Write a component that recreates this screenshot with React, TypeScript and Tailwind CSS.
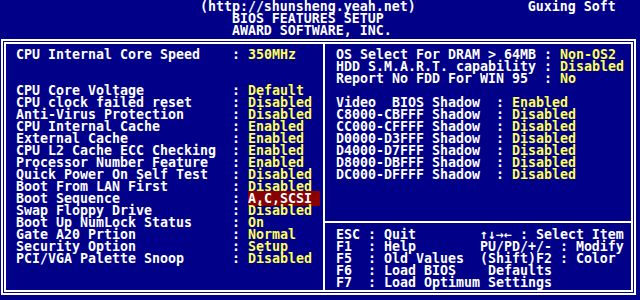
// Award BIOS "BIOS FEATURES SETUP" screen, 80x25 text mode at 8x12 cells.

type Item = [string, string] | null;

const leftItems: Item[] = [
  ["CPU Internal Core Speed", "350MHz"],
  null,
  null,
  ["CPU Core Voltage", "Default"],
  ["CPU clock failed reset", "Disabled"],
  ["Anti-Virus Protection", "Disabled"],
  ["CPU Internal Cache", "Enabled"],
  ["External Cache", "Enabled"],
  ["CPU L2 Cache ECC Checking", "Enabled"],
  ["Processor Number Feature", "Enabled"],
  ["Quick Power On Self Test", "Disabled"],
  ["Boot From LAN First", "Disabled"],
  ["Boot Sequence", "A,C,SCSI"],
  ["Swap Floppy Drive", "Disabled"],
  ["Boot Up NumLock Status", "On"],
  ["Gate A20 Prtion", "Normal"],
  ["Security Option", "Setup"],
  ["PCI/VGA Palette Snoop", "Disabled"],
  null,
  null,
];

const rightTop: ([string, string, number] | null)[] = [
  ["OS Select For DRAM > 64MB", "Non-OS2", 26],
  ["HDD S.M.A.R.T. capability", "Disabled", 26],
  ["Report No FDD For WIN 95", "No", 26],
  null,
  ["Video  BIOS Shadow", "Enabled", 20],
  ["C8000-CBFFF Shadow", "Disabled", 20],
  ["CC000-CFFFF Shadow", "Disabled", 20],
  ["D0000-D3FFF Shadow", "Disabled", 20],
  ["D4000-D7FFF Shadow", "Disabled", 20],
  ["D8000-DBFFF Shadow", "Disabled", 20],
  ["DC000-DFFFF Shadow", "Disabled", 20],
  null,
  null,
  null,
];

const helpLines = [
  "ESC : Quit        \u2191\u2193\u2192\u2190 : Select Item",
  "F1  : Help        PU/PD/+/- : Modify",
  "F5  : Old Values  (Shift)F2 : Color",
  "F6  : Load BIOS    Defaults",
  "F7  : Load Optimum Settings",
];

const HIGHLIGHT = "Boot Sequence";

// one 12px text row; text sits 1px low in the cell like the VGA font does
function Line({ children }: { children?: React.ReactNode }) {
  return (
    <div className="h-[12px] whitespace-pre">
      <div className="relative top-[1px] leading-[12px]">{children}</div>
    </div>
  );
}

export default function App() {
  return (
    <div
      className="h-[300px] w-[640px] overflow-hidden bg-[#000088] text-[13.29px] font-bold text-white"
      style={{ fontFamily: '"DejaVu Sans Mono", "Liberation Mono", monospace' }}
    >
      {/* header, rows 0-2 */}
      <Line>
        {" ".repeat(25)}(http://shunsheng.yeah.net){" ".repeat(14)}Guxing Soft
      </Line>
      <Line>{" ".repeat(29)}BIOS FEATURES SETUP</Line>
      <Line>{" ".repeat(29)}AWARD SOFTWARE, INC.</Line>

      <div className="ml-[1px] mt-[3px] flex h-[256px] w-[635px] border-[5px] border-double border-white">
        {/* left column */}
        <div className="w-[319px] border-r-2 border-white pl-[10px] pt-[4px]">
          {leftItems.map((item, i) =>
            item ? (
              <Line key={i}>
                {item[0].padEnd(27)}: {item[0] === HIGHLIGHT ? (
                  <span className="bg-[#880000] text-white">{item[1].padEnd(9)}</span>
                ) : (
                  <span className="text-[#ffff55]">{item[1]}</span>
                )}
              </Line>
            ) : (
              <Line key={i} />
            )
          )}
        </div>

        {/* right column */}
        <div className="flex flex-1 flex-col pt-[4px]">
          <div className="pl-[11px]">
            {rightTop.map((item, i) =>
              item ? (
                <Line key={i}>
                  {item[0].padEnd(item[2])}: <span className="text-[#ffff55]">{item[1]}</span>
                </Line>
              ) : (
                <Line key={i} />
              )
            )}
          </div>
          <div className="mt-[5px] h-[2px] bg-white" />
          <div className="mt-[5px] pl-[11px]">
            {helpLines.map((text) => (
              <Line key={text}>{text}</Line>
            ))}
          </div>
        </div>
      </div>
    </div>
  );
}
